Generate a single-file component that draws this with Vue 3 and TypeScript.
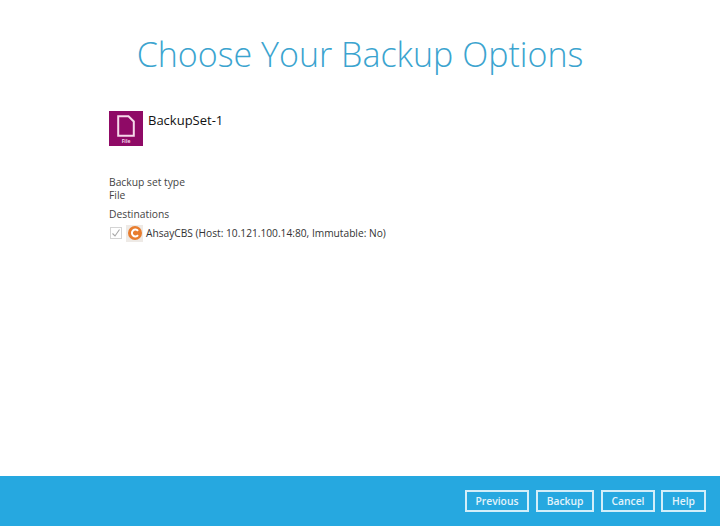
<script setup lang="ts">
const buttons: string[] = ['Previous', 'Backup', 'Cancel', 'Help']
</script>

<template>
  <div class="page">
    <main class="content">
      <h1 class="title">Choose Your Backup Options</h1>
      <div class="set">
        <div class="set-icon">
          <svg width="18" height="22" viewBox="0 0 18 22" class="doc">
            <path d="M1.2 1.2H11.5L16.8 6.5V20.8H1.2Z" fill="none" stroke="#f6d9ea" stroke-width="2" />
          </svg>
          <span class="set-icon-label">File</span>
        </div>
        <div class="set-name">BackupSet-1</div>
      </div>
      <div class="label type-label">Backup set type</div>
      <div class="label">File</div>
      <div class="label dest-label">Destinations</div>
      <div class="dest">
        <span class="check">
          <svg width="12" height="12" viewBox="0 0 12 12">
            <path d="M2.5 6.5L5 9L9.5 2.5" fill="none" stroke="#a8a8a8" stroke-width="1.1" />
          </svg>
        </span>
        <span class="cbs">
          <svg width="14" height="14" viewBox="0 0 14 14">
            <circle cx="7" cy="7" r="7" fill="#e87d2f" />
            <path d="M10 4.9A3.4 3.4 0 1 0 10 9.1" fill="none" stroke="#fff" stroke-width="2" />
          </svg>
        </span>
        <span class="dest-text">AhsayCBS (Host: 10.121.100.14:80, Immutable: No)</span>
      </div>
    </main>
    <footer class="footer">
      <button v-for="b in buttons" :key="b" class="btn" type="button">{{ b }}</button>
    </footer>
  </div>
</template>

<style scoped>
.page {
  width: 720px;
  height: 526px;
  display: flex;
  flex-direction: column;
  background: #fff;
  font-family: "Open Sans", "Noto Sans", sans-serif;
  overflow: hidden;
}
.content {
  flex: 1;
  padding: 0 109px;
}
.title {
  margin: 30px -60px 0;
  font-size: 34px;
  line-height: 49px;
  font-weight: 300;
  color: #3ba4cf;
  text-align: center;
}
.set {
  display: flex;
  align-items: flex-start;
  gap: 5px;
  margin-top: 32px;
}
.set-icon {
  width: 34px;
  height: 35px;
  background: #8f0a66;
  display: flex;
  flex-direction: column;
  align-items: center;
}
.doc {
  margin-top: 4px;
  display: block;
}
.set-icon-label {
  margin-top: 1px;
  font-size: 5px;
  line-height: 7px;
  font-weight: 700;
  color: #f6d9ea;
}
.set-name {
  font-size: 13px;
  line-height: 18px;
  color: #111;
}
.label {
  font-size: 10.3px;
  line-height: 13px;
  color: #444;
}
.type-label {
  margin-top: 30px;
}
.dest-label {
  margin-top: 6px;
}
.dest {
  display: flex;
  align-items: center;
  margin-top: 3px;
  height: 18px;
}
.check {
  width: 12px;
  height: 12px;
  border: 1px solid #d4d4d4;
  box-sizing: border-box;
  display: flex;
  align-items: center;
  justify-content: center;
  margin-left: 1px;
}
.check svg {
  flex: none;
}
.cbs {
  width: 17px;
  height: 17px;
  margin-left: 4px;
  background: #eeeae6;
  display: flex;
  align-items: center;
  justify-content: center;
}
.dest-text {
  margin-left: 3px;
  font-size: 10.2px;
  color: #333;
  white-space: nowrap;
}
.footer {
  height: 50px;
  background: #26a8e0;
  display: flex;
  align-items: center;
  justify-content: flex-end;
  gap: 7px;
  padding-right: 14px;
}
.btn {
  height: 22px;
  padding: 0;
  border: 2px solid #d3eef9;
  background: transparent;
  color: #e3f4fb;
  font-family: inherit;
  font-size: 10.3px;
  font-weight: 600;
  box-sizing: border-box;
}
.btn:nth-child(1) { width: 64px; }
.btn:nth-child(2) { width: 58px; }
.btn:nth-child(3) { width: 54px; }
.btn:nth-child(4) { width: 45px; margin-left: -1px; }
</style>
